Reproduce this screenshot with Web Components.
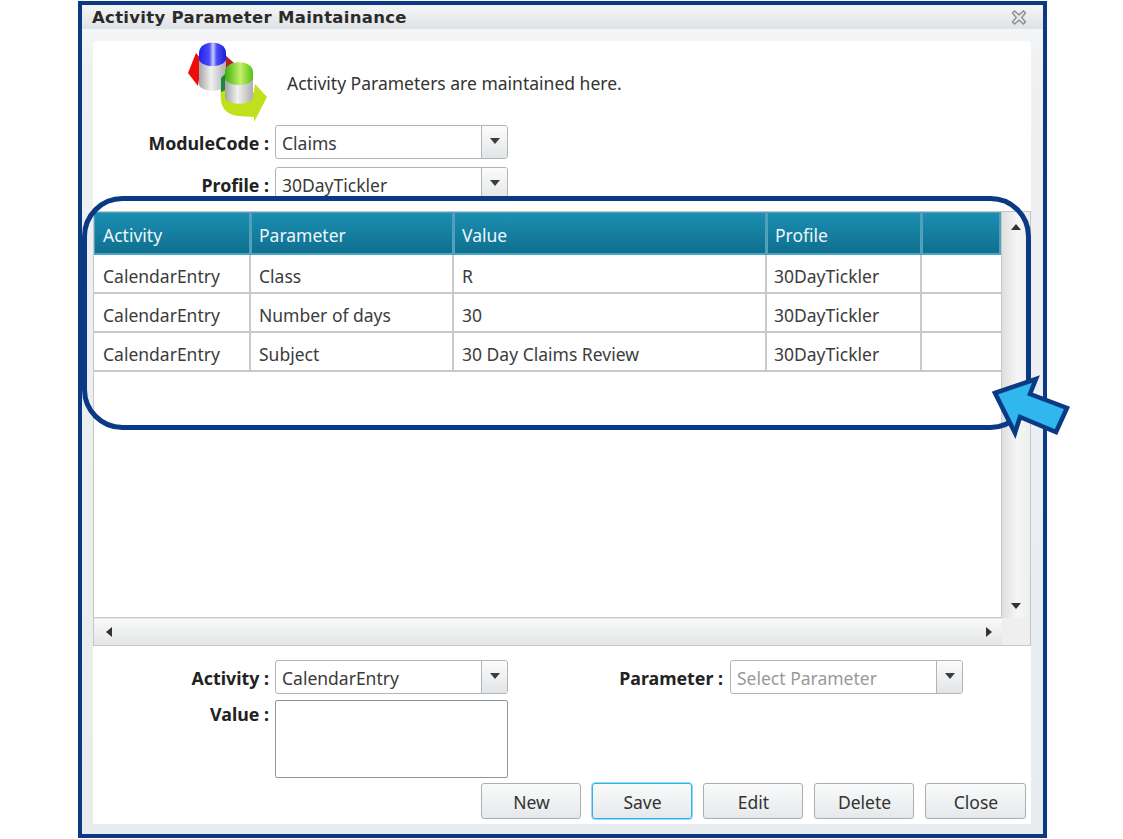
<!DOCTYPE html>
<html>
<head>
<meta charset="utf-8">
<title>Activity Parameter Maintainance</title>
<style>
  html, body { margin: 0; padding: 0; background: #fff; overflow: hidden; }
  body { font-family: "Noto Sans", "Open Sans", sans-serif; color: #333; }
  .tools { display: flex; gap: 11px; justify-content: flex-end; padding: 5px 5px 0 0; }
  .bottom { display: grid; grid-template-columns: auto auto; justify-content: start; row-gap: 6px; margin-top: 14px; }
</style>
</head>
<body>
<template id="tpl-window">
  <style>
    :host { display: block; position: relative; box-sizing: border-box; width: 969px; height: 837px; margin: 1px 0 0 78px;
      border: 4px solid #0b3a84; background: #e9ecef; }
    .title { display: flex; align-items: center; justify-content: space-between; height: 24px; padding: 0 16px 0 10px;
      background: linear-gradient(#f5f6f7, #dfe2e5); font: bold 16.500px "DejaVu Sans", sans-serif; letter-spacing: .3px; color: #2b2b2b; }
    .body { background: linear-gradient(#f3f5f6 0, #eef0f2 40px, #e9ecef 100%); padding: 12px 12px 0 11px; height: 795px; box-sizing: border-box; }
    .panel { background: #fff; border-radius: 4px 4px 0 0; height: 783px; box-sizing: border-box; }
    svg { display: block; }
  </style>
  <div class="title">
    <span><slot name="title"></slot></span>
    <svg width="16" height="15" viewBox="0 0 16 15"><path d="M1.500 3 L3.500 1 L8 4.800 L12.500 1 L14.500 3 L10.700 7.500 L14.500 12 L12.500 14 L8 10.200 L3.500 14 L1.500 12 L5.300 7.500 Z" fill="#e8e8e8" stroke="#8d8d8d" stroke-width="1.400"/></svg>
  </div>
  <div class="body"><div class="panel"><slot></slot></div></div>
  <slot name="overlay"></slot>
</template>

<template id="tpl-head">
  <style>
    :host { display: flex; align-items: flex-start; height: 84px; padding-left: 92px; box-sizing: border-box; }
    svg { display: block; filter: blur(.5px); }
    span { margin: 30px 0 0 19px; font-size: 17.500px; line-height: 24px; color: #333; white-space: nowrap; }
  </style>
  <svg width="83" height="82" viewBox="185 41 83 82">
    <defs>
      <linearGradient id="steel" x1="0" x2="1" y1="0" y2="0">
        <stop offset="0" stop-color="#a4a4a4"/><stop offset=".45" stop-color="#f1f1f1"/><stop offset="1" stop-color="#aeaeae"/>
      </linearGradient>
      <linearGradient id="blue" x1="0" x2="1" y1="0" y2="0">
        <stop offset="0" stop-color="#2222ee"/><stop offset=".38" stop-color="#4a4cf5"/><stop offset=".52" stop-color="#c9cbff"/><stop offset=".66" stop-color="#4a4cf5"/><stop offset="1" stop-color="#1c1cd8"/>
      </linearGradient>
      <linearGradient id="green" x1="0" x2="1" y1="0" y2="0">
        <stop offset="0" stop-color="#3db00a"/><stop offset=".55" stop-color="#c4f06a"/><stop offset="1" stop-color="#54c010"/>
      </linearGradient>
    </defs>
    <path d="M196 53 L188 73 L198 86 L202 60 Z" fill="#f00a0a"/>
    <path d="M224 54 L234 63 L230 74 L224 72 Z" fill="#b51f1f"/>
    <path d="M199 55 V84 C199 93 226 93 226 84 V55 Z" fill="url(#steel)"/>
    <path d="M199 53 C199 39 226 39 226 53 V60 C222 68 203 68 199 60 Z" fill="url(#blue)"/>
    <path d="M221 88 C219 106 224 114 238 116 L254 117 L254 122 L267 97 L255 84 L254 92 L236 100 Z" fill="#bfe01a"/>
    <path d="M225 74 L221 78 V92 L226 90 Z" fill="#158a3c"/>
    <path d="M225 73 V97 C225 106 253 106 253 97 V73 Z" fill="url(#steel)"/>
    <path d="M225 72 C225 59 253 59 253 72 V79 C249 87 229 87 225 79 Z" fill="url(#green)"/>
  </svg>
  <span><slot></slot></span>
</template>

<template id="tpl-combo">
  <style>
    :host { display: flex; align-items: flex-start; height: 34px; }
    label { box-sizing: border-box; height: 34px; text-align: right; font-weight: 700; font-size: 17.800px; line-height: 36px; color: #222; white-space: nowrap; }
    .box { display: flex; box-sizing: border-box; width: 233px; height: 34px; background: #fff; border: 1px solid #b4b4b4; border-radius: 3px; }
    .val { flex: 1; padding-left: 6px; font-size: 17.500px; line-height: 34px; color: #3a3a3a; white-space: nowrap; }
    :host([placeholder]) .val { color: #9a9a9a; }
    .btn { width: 25px; border-left: 1px solid #b4b4b4; background: linear-gradient(#fbfcfc, #e2e5e7); display: flex; align-items: center; justify-content: center; border-radius: 0 2px 2px 0; }
    .btn i { display: block; width: 0; height: 0; margin-top: -2px; border: 5.500px solid transparent; border-top: 6px solid #3c3c3c; border-bottom: 0; }
  </style>
  <label></label>
  <div class="box"><div class="val"></div><div class="btn"><i></i></div></div>
</template>

<template id="tpl-area">
  <style>
    :host { display: flex; align-items: flex-start; }
    label { box-sizing: border-box; width: 182px; padding-right: 6px; text-align: right; font-weight: 700; font-size: 17.800px; line-height: 28px; color: #222; }
    .box { box-sizing: border-box; width: 233px; height: 78px; background: #fff; border: 1px solid #8b98a3; border-radius: 2px; }
  </style>
  <label></label><div class="box"></div>
</template>

<template id="tpl-grid">
  <style>
    :host { display: grid; grid-template-columns: 1fr 28px; grid-template-rows: 1fr 27px; box-sizing: border-box; height: 435px;
      margin-top: 10px; border: 1px solid #c6c6c6; background: #fff; }
    .rows { border-right: 1px solid #c9c9c9; border-bottom: 1px solid #c9c9c9; overflow: hidden; }
    .row { display: grid; grid-template-columns: 157px 203px 313px 155px 1fr; }
    .row > div { box-sizing: border-box; padding-left: 8px; white-space: nowrap; font-size: 17.500px; overflow: hidden; }
    .head { height: 43px; }
    .head > div { height: 43px; padding-left: 7px; line-height: 44px; color: #eef6f9; background: linear-gradient(#1b8fb2, #0f6f8f); border: 1px solid #4fa0b8; border-width: 1px 2px 2px 1px; border-bottom-color: #4aa6c2; }
    .head > div:first-child { padding-left: 8px; }
    .body .row { height: 39px; border-bottom: 2px solid #c9c9c9; box-sizing: border-box; }
    .body .row > div { height: 37px; line-height: 43px; color: #3c3c3c; border-right: 2px solid #c9c9c9; }
    .body .row > div:first-child { padding-left: 9px; }
    .body .row > div:nth-child(4) { padding-left: 7px; }
    .body .row > div:last-child { border-right: 0; }
    .vbar { display: flex; flex-direction: column; justify-content: space-between; align-items: center; padding: 12px 0 9px; background: linear-gradient(90deg, #dedfe0, #f6f6f6 55%, #eeeeee); }
    .hbar { display: flex; justify-content: space-between; align-items: center; padding: 0 10px 0 12px; background: linear-gradient(#f9f9f9, #e3e5e6); border-top: 1px solid #e6e6e6; }
    .corner { background: #efefef; }
    i { display: block; width: 0; height: 0; border: 5.500px solid transparent; }
    .up { border-top: 0; border-bottom: 6px solid #333; }
    .down { border-bottom: 0; border-top: 6px solid #333; }
    .left { border-left: 0; border-right: 6px solid #333; }
    .right { border-right: 0; border-left: 6px solid #333; }
  </style>
  <div class="rows">
    <div class="row head"></div>
    <div class="body"></div>
  </div>
  <div class="vbar"><i class="up"></i><i class="down"></i></div>
  <div class="hbar"><i class="left"></i><i class="right"></i></div>
  <div class="corner"></div>
</template>

<template id="tpl-button">
  <style>
    :host { display: block; }
    button { display: block; box-sizing: border-box; width: 100px; height: 36px; padding: 1px 0 0 1px; border: 1px solid #adadad; border-radius: 3px;
      background: linear-gradient(#f9fafa, #e6e9eb); font: 17.500px "Noto Sans", sans-serif; color: #333; }
    :host(:last-child) button { width: 101px; }
    :host([focused]) button { border-color: #2fb2ea; box-shadow: 0 0 0 .5px #2fb2ea; }
  </style>
  <button><slot></slot></button>
</template>

<template id="tpl-callout">
  <style>
    :host { display: block; position: absolute; inset: 0; pointer-events: none; }
    svg { position: absolute; left: -82px; top: -5px; }
  </style>
  <svg width="1123" height="839" viewBox="0 0 1123 839">
    <rect x="84.500" y="198.500" width="944" height="229" rx="38" ry="38" fill="none" stroke="#0b3a84" stroke-width="5"/>
    <path d="M995 393 L1036 379 L1030 394 L1067 408 L1056 432 L1020 417 L1015 433 Z" fill="#2fb7ee" stroke="#0b3a84" stroke-width="4.500" stroke-linejoin="miter"/>
  </svg>
</template>

<win-dow>
  <span slot="title">Activity Parameter Maintainance</span>
  <panel-head>Activity Parameters are maintained here.</panel-head>
  <combo-field label="ModuleCode :" value="Claims" lw="182"></combo-field>
  <combo-field label="Profile :" value="30DayTickler" lw="182" style="margin-top:8px"></combo-field>
  <data-grid></data-grid>
  <div class="bottom">
    <combo-field label="Activity :" value="CalendarEntry" lw="182"></combo-field>
    <combo-field label="Parameter :" value="Select Parameter" lw="222" placeholder></combo-field>
    <area-field label="Value :" style="grid-column:1 / 3"></area-field>
  </div>
  <div class="tools">
    <tool-button>New</tool-button>
    <tool-button focused>Save</tool-button>
    <tool-button>Edit</tool-button>
    <tool-button>Delete</tool-button>
    <tool-button>Close</tool-button>
  </div>
  <call-out slot="overlay"></call-out>
</win-dow>

<script>
  // helper: each element clones its own template into an open shadow root
  class Base extends HTMLElement {
    constructor() {
      super();
      const tpl = document.getElementById(this.constructor.tpl);
      this.attachShadow({ mode: 'open' }).appendChild(tpl.content.cloneNode(true));
    }
  }

  class WinDow extends Base { static tpl = 'tpl-window'; }
  class PanelHead extends Base { static tpl = 'tpl-head'; }
  class ToolButton extends Base { static tpl = 'tpl-button'; }
  class CallOut extends Base { static tpl = 'tpl-callout'; }

  class ComboField extends Base {
    static tpl = 'tpl-combo';
    connectedCallback() {
      const label = this.shadowRoot.querySelector('label');
      label.textContent = this.getAttribute('label');
      label.style.width = this.getAttribute('lw') + 'px';
      label.style.paddingRight = (this.getAttribute('lw') === '222' ? 7 : 6) + 'px';
      this.shadowRoot.querySelector('.val').textContent = this.getAttribute('value');
    }
  }

  class AreaField extends Base {
    static tpl = 'tpl-area';
    connectedCallback() {
      this.shadowRoot.querySelector('label').textContent = this.getAttribute('label');
    }
  }

  class DataGrid extends Base {
    static tpl = 'tpl-grid';
    connectedCallback() {
      const cols = ['Activity', 'Parameter', 'Value', 'Profile', ''];
      const rows = [
        ['CalendarEntry', 'Class', 'R', '30DayTickler', ''],
        ['CalendarEntry', 'Number of days', '30', '30DayTickler', ''],
        ['CalendarEntry', 'Subject', '30 Day Claims Review', '30DayTickler', ''],
      ];
      const root = this.shadowRoot;
      root.querySelector('.head').innerHTML = cols.map(c => `<div>${c}</div>`).join('');
      root.querySelector('.body').innerHTML = rows.map(r =>
        `<div class="row">${r.map(v => `<div>${v}</div>`).join('')}</div>`).join('');
    }
  }

  customElements.define('win-dow', WinDow);
  customElements.define('panel-head', PanelHead);
  customElements.define('combo-field', ComboField);
  customElements.define('area-field', AreaField);
  customElements.define('data-grid', DataGrid);
  customElements.define('tool-button', ToolButton);
  customElements.define('call-out', CallOut);
</script>
</body>
</html>
